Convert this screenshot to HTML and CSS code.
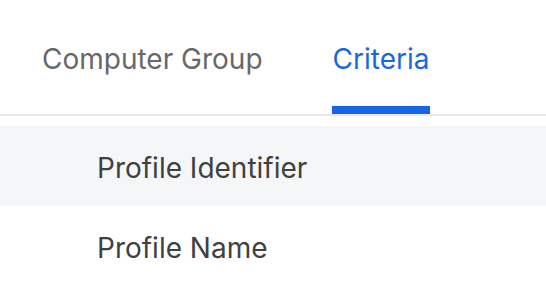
FILE: index.html
```html
<!DOCTYPE html>
<html lang="en">
<head>
    <meta charset="UTF-8">
    <meta name="viewport" content="width=device-width, initial-scale=1.0">
    <title>Criteria</title>
    <link rel="stylesheet" href="styles.css">
</head>
<body>
    <nav class="tabs">
        <a href="#" class="tab">Computer Group</a>
        <a href="#" class="tab active">Criteria</a>
    </nav>

    <ul class="criteria-list">
        <li class="row highlighted">Profile Identifier</li>
        <li class="row">Profile Name</li>
    </ul>
</body>
</html>
```

FILE: styles.css
```css
* {
    margin: 0;
    padding: 0;
    box-sizing: border-box;
}

body {
    font-family: Inter, "Noto Sans", sans-serif;
    background: #fff;
}

.tabs {
    display: flex;
    gap: 68px;
    padding-left: 41px;
    border-bottom: 2px solid #e8e8e8;
}

.tab {
    display: flex;
    align-items: center;
    height: 114px;
    padding: 12px 1px 0;
    border-bottom: 8px solid transparent;
    color: #686868;
    font-size: 28px;
    text-decoration: none;
}

.tab.active {
    color: #1a67dd;
    border-bottom-color: #1565e6;
}

.criteria-list {
    list-style: none;
    margin-top: 10px;
}

.row {
    display: flex;
    align-items: center;
    height: 80px;
    padding-top: 4px;
    padding-left: 97px;
    color: #404040;
    font-size: 28px;
}

.row.highlighted {
    background: #f5f6f8;
}
```
